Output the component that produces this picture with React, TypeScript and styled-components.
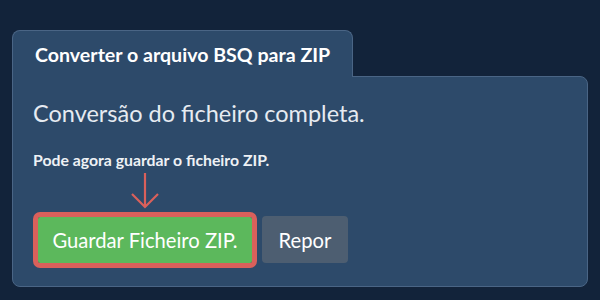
import * as React from 'react';
import styled, { createGlobalStyle } from 'styled-components';

const GlobalStyle = createGlobalStyle`
  html, body {
    margin: 0;
    padding: 0;
    background: #12233a;
  }
  body {
    font-family: Lato, "Open Sans", sans-serif;
  }
`

const Page = styled.div`
  width: 600px;
  height: 300px;
  box-sizing: border-box;
  padding: 30px 12px 0 12px;
  background: #12233a;
`

const Card = styled.div`
  width: 576px;
  display: flex;
  flex-direction: column;
`

const Tab = styled.div`
  align-self: flex-start;
  width: 341px;
  height: 47px;
  box-sizing: border-box;
  padding: 12px 0 0 22px;
  background: #2d4a6a;
  border: 1px solid #4a6585;
  border-bottom: none;
  border-radius: 8px 8px 0 0;
  color: #ffffff;
  font-weight: 700;
  font-size: 19.6px;
  line-height: 24px;
  position: relative;
  z-index: 1;
  margin-bottom: -1px;
`

const Panel = styled.div`
  background: #2d4a6a;
  border: 1px solid #4a6585;
  border-radius: 0 8px 8px 8px;
  height: 211px;
  box-sizing: border-box;
  padding: 21px 20px 0 20px;
  display: flex;
  flex-direction: column;
`

const Heading = styled.div`
  color: #e6ebf1;
  font-size: 23.5px;
  font-weight: 400;
  line-height: 30px;
`

const Note = styled.div`
  margin-top: 22px;
  color: #eef1f5;
  font-size: 15.8px;
  font-weight: 700;
  line-height: 20px;
`

const ArrowWrap = styled.div`
  height: 36px;
  margin-top: 3px;
  padding-left: 97px;
`

const Actions = styled.div`
  display: flex;
  align-items: center;
  gap: 10px;
  margin-top: 7px;
  padding-left: 5px;
`

const Button = styled.button<{ $variant: 'save' | 'reset' }>`
  font-family: Lato, "Open Sans", sans-serif;
  font-size: 20.2px;
  font-weight: 400;
  color: #ffffff;
  border: none;
  height: ${p => (p.$variant === 'save' ? '46px' : '47px')};
  box-sizing: border-box;
  padding: 0;
  width: ${p => (p.$variant === 'save' ? '214px' : '86px')};
  background: ${p => (p.$variant === 'save' ? '#5cb85c' : '#4d5e71')};
  outline: ${p => (p.$variant === 'save' ? '5px solid #d9605b' : 'none')};
  border-radius: ${p => (p.$variant === 'save' ? '2px' : '4px')};
`

const DownArrow = () => (
  <svg width="30" height="36" viewBox="0 0 30 36">
    <path d="M15 0 L15 34 M2 21 L15 34 L28 21" fill="none" stroke="#d9605b" strokeWidth="2.2" />
  </svg>
)

export default function App() {
  return (
    <>
      <GlobalStyle />
      <Page>
        <Card>
          <Tab>Converter o arquivo BSQ para ZIP</Tab>
          <Panel>
            <Heading>Conversão do ficheiro completa.</Heading>
            <Note>Pode agora guardar o ficheiro ZIP.</Note>
            <ArrowWrap>
              <DownArrow />
            </ArrowWrap>
            <Actions>
              <Button $variant="save">Guardar Ficheiro ZIP.</Button>
              <Button $variant="reset">Repor</Button>
            </Actions>
          </Panel>
        </Card>
      </Page>
    </>
  );
}
